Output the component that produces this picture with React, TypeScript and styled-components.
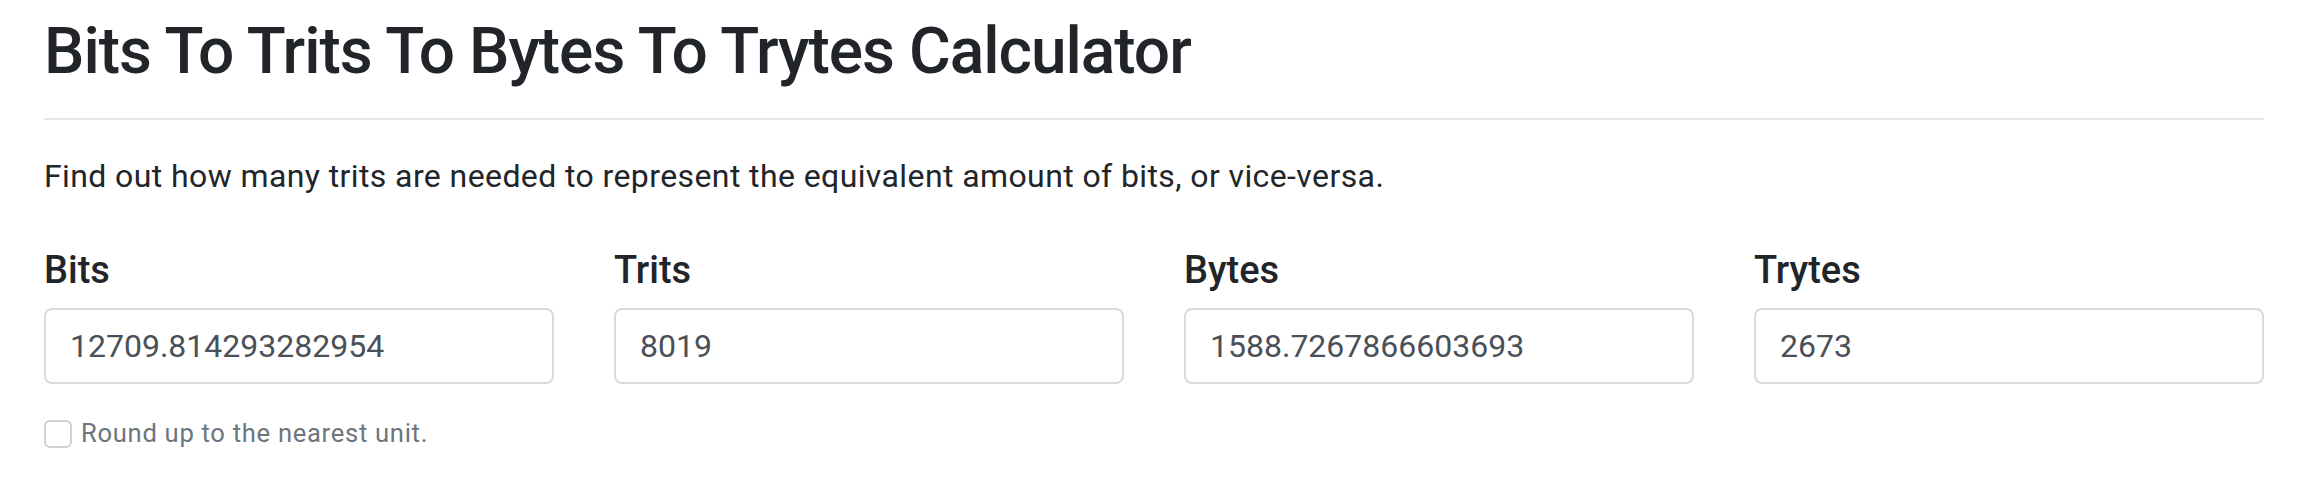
import React, { useState } from 'react';
import styled, { createGlobalStyle } from 'styled-components';

const GlobalStyle = createGlobalStyle`
  html, body {
    margin: 0;
    padding: 0;
    background: #ffffff;
  }
  body {
    font-family: Roboto, "Liberation Sans", Arial, sans-serif;
    color: #212529;
  }
  * {
    box-sizing: border-box;
  }
`;

const Page = styled.div`
  padding: 14px 40px 0 44px;
`;

const Title = styled.h1`
  margin: 0;
  font-size: 64px;
  line-height: 76.8px;
  font-weight: 500;
  letter-spacing: -1px;
  color: #212529;
`;

const Divider = styled.hr`
  margin: 27px 0 32px;
  border: 0;
  border-top: 2px solid rgba(0, 0, 0, 0.1);
`;

const Lead = styled.p`
  margin: 0;
  font-size: 32px;
  line-height: 48px;
  letter-spacing: 0.4px;
  color: #212529;
`;

const FieldRow = styled.div`
  display: grid;
  grid-template-columns: repeat(4, 1fr);
  column-gap: 60px;
  margin-top: 48px;
`;

const Field = styled.div`
  display: flex;
  flex-direction: column;
`;

const Label = styled.label`
  font-size: 38px;
  line-height: 45.6px;
  font-weight: 500;
  color: #212529;
  margin-bottom: 15px;
`;

const NumberInput = styled.input`
  width: 100%;
  height: 76px;
  padding: 12px 24px;
  border: 2px solid #d8dadc;
  border-radius: 8px;
  font-family: inherit;
  font-size: 32px;
  line-height: 48px;
  color: #495057;
  background: #fff;
  outline: none;
`;

const CheckRow = styled.label`
  display: flex;
  align-items: center;
  gap: 9px;
  margin-top: 30px;
  font-size: 25.6px;
  line-height: 38.4px;
  letter-spacing: 0.7px;
  color: #6c757d;
`;

const Box = styled.input`
  appearance: none;
  margin: 0;
  width: 28px;
  height: 28px;
  border: 2px solid #cfcfcf;
  border-radius: 6px;
  background: #fff;

  &:checked {
    background: #007bff;
    border-color: #007bff;
  }
`;

const fields = [
  { key: 'bits', label: 'Bits', value: '12709.814293282954' },
  { key: 'trits', label: 'Trits', value: '8019' },
  { key: 'bytes', label: 'Bytes', value: '1588.7267866603693' },
  { key: 'trytes', label: 'Trytes', value: '2673' },
];

const App = () => {
  const [values, setValues] = useState<Record<string, string>>(
    Object.fromEntries(fields.map((f) => [f.key, f.value]))
  );
  const [roundUp, setRoundUp] = useState(false);

  return (
    <Page>
      <GlobalStyle />
      <Title>Bits To Trits To Bytes To Trytes Calculator</Title>
      <Divider />
      <Lead>
        Find out how many trits are needed to represent the equivalent amount of bits, or vice-versa.
      </Lead>
      <FieldRow>
        {fields.map((f) => (
          <Field key={f.key}>
            <Label htmlFor={f.key}>{f.label}</Label>
            <NumberInput
              id={f.key}
              type="text"
              value={values[f.key]}
              onChange={(e) => setValues({ ...values, [f.key]: e.target.value })}
            />
          </Field>
        ))}
      </FieldRow>
      <CheckRow>
        <Box type="checkbox" checked={roundUp} onChange={(e) => setRoundUp(e.target.checked)} />
        Round up to the nearest unit.
      </CheckRow>
    </Page>
  );
};

export default App;
